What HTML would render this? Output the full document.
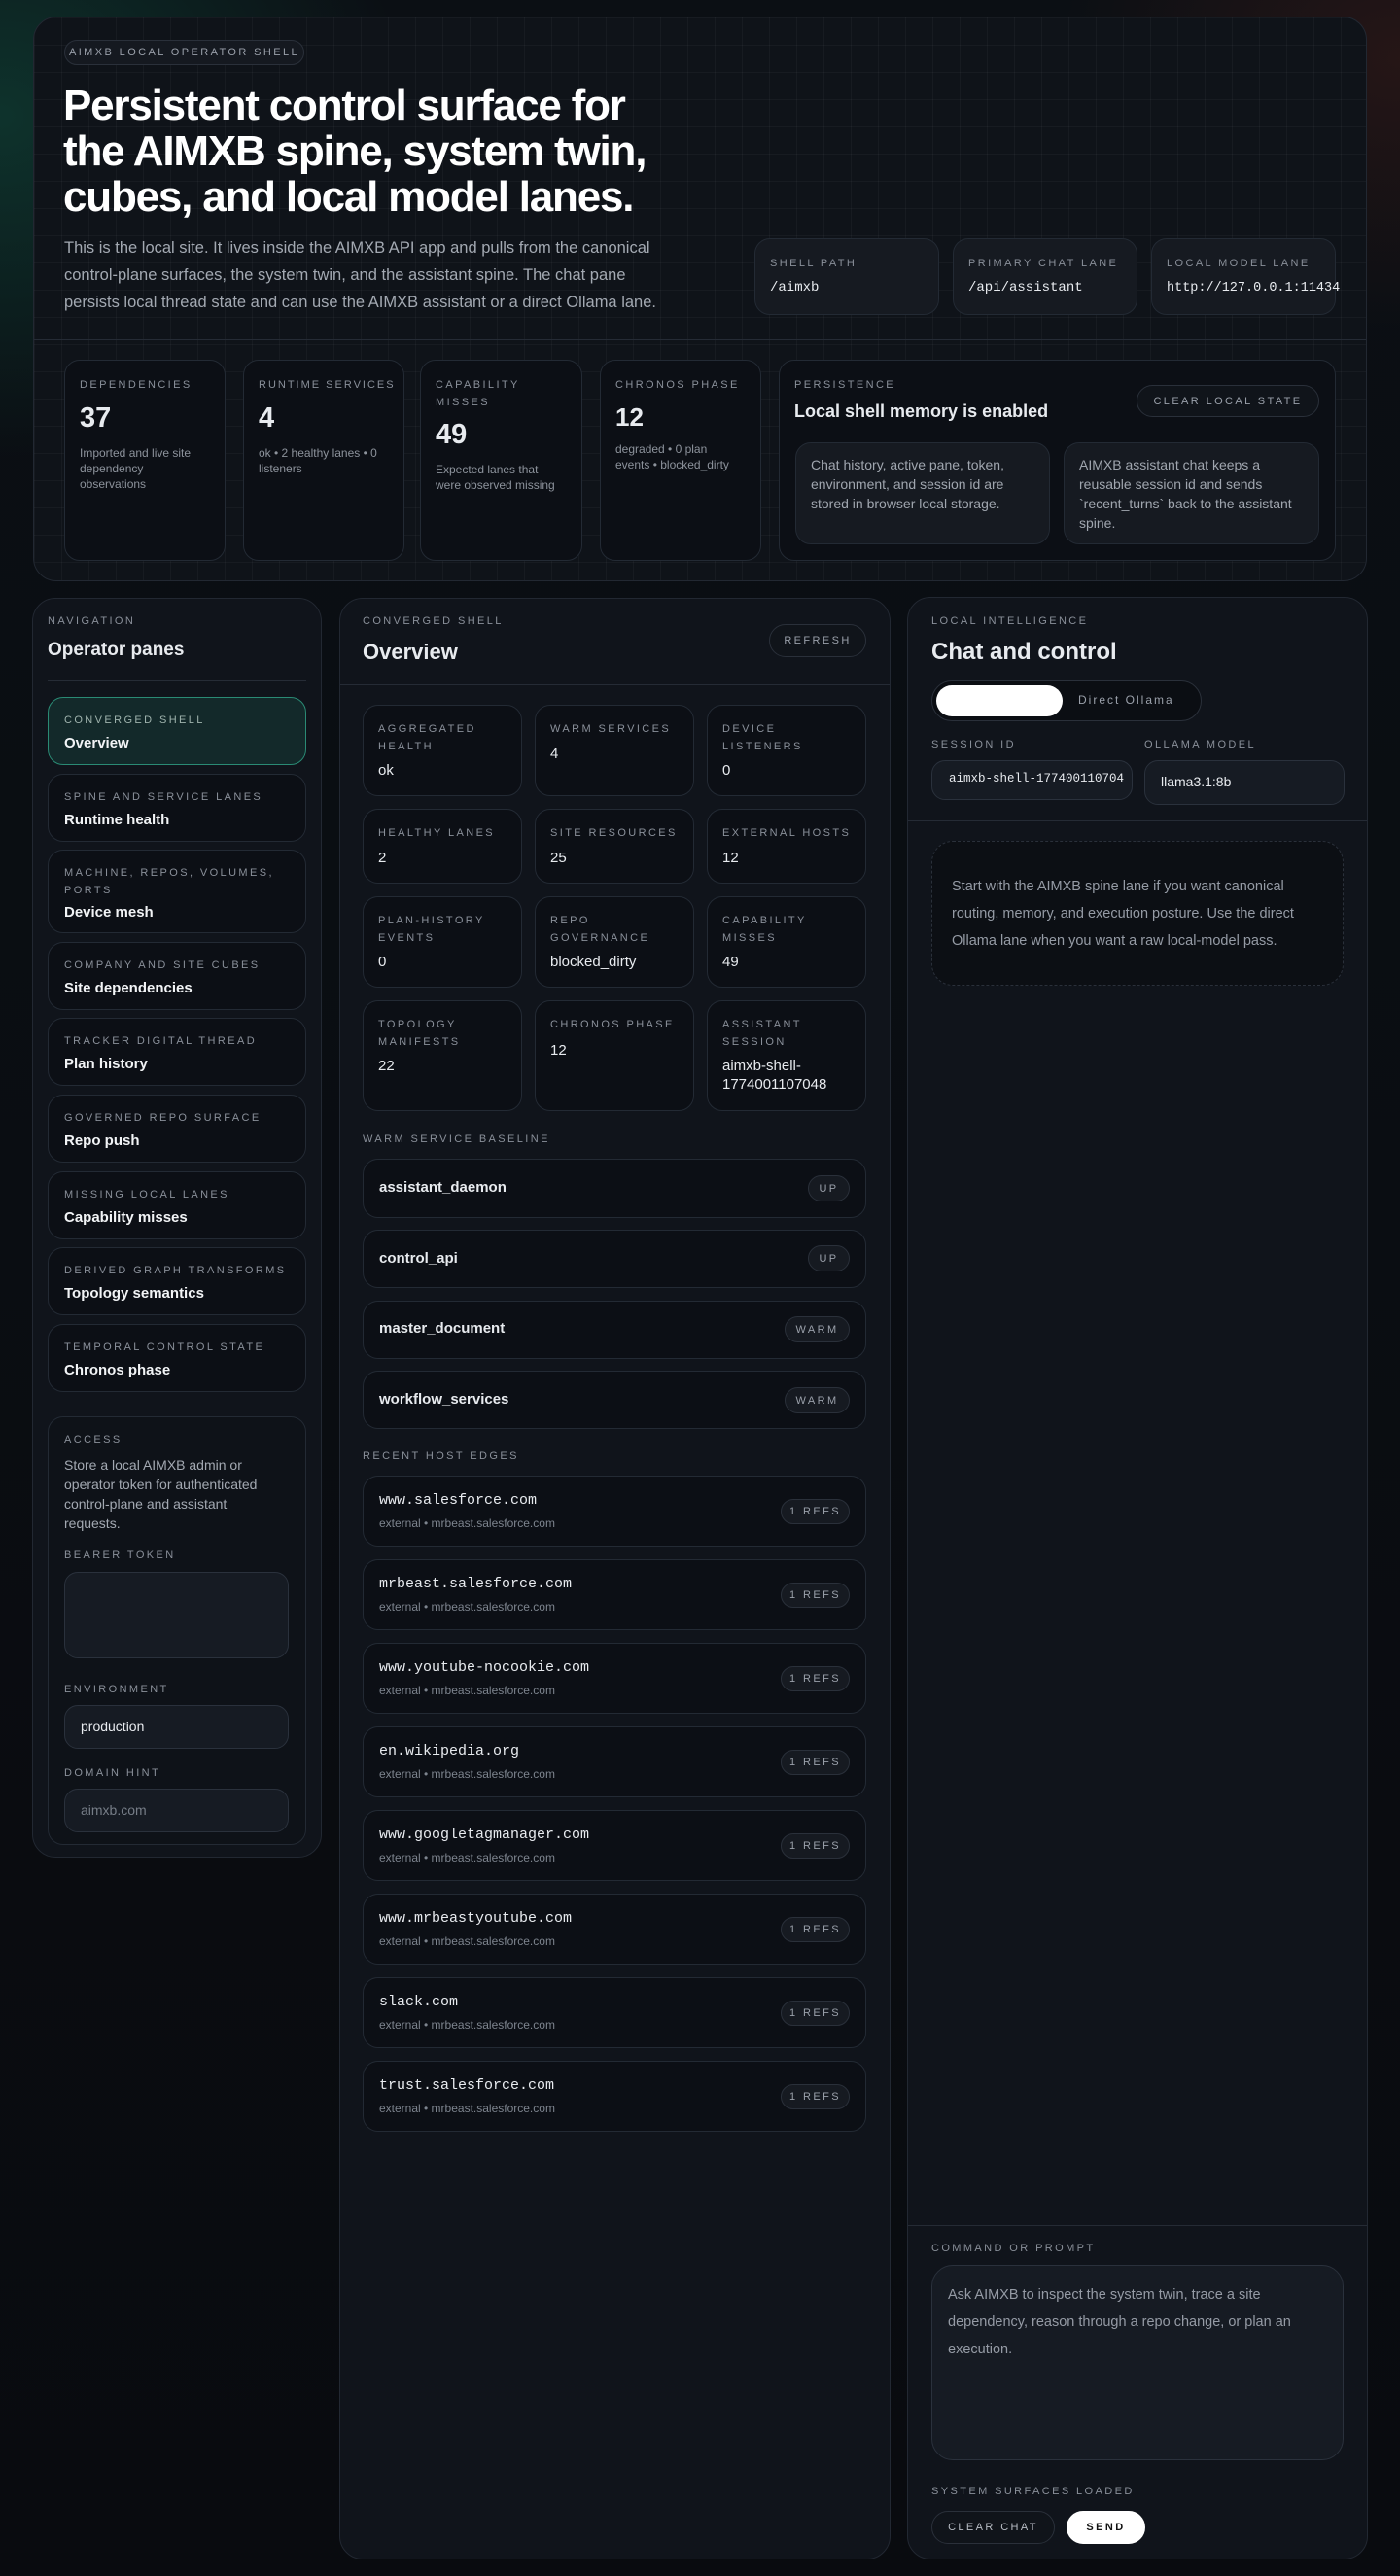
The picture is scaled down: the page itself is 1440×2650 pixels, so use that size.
<!DOCTYPE html>
<html><head><meta charset="utf-8">
<style>
*{box-sizing:border-box;margin:0;padding:0}
html,body{width:1440px;height:2650px;overflow:hidden}
body{position:relative;background:#0a0d12;font-family:"Liberation Sans",sans-serif;color:#e8ebef}
.bg{position:absolute;inset:0;background:
radial-gradient(600px 500px at 0px 120px,rgba(16,80,64,.55),transparent 70%),
radial-gradient(500px 400px at 1440px 60px,rgba(70,30,25,.45),transparent 70%),
linear-gradient(#0b0f14,#090b0f);}
.a{position:absolute}
.card{position:absolute;background:#10141b;border:1px solid #222832;border-radius:24px}
.box{position:absolute;background:#0c0f15;border:1px solid #232a34;border-radius:16px}
.lab{position:absolute;font-size:11px;letter-spacing:2.4px;text-transform:uppercase;color:#8a909a;line-height:18px}
.t{position:absolute;white-space:nowrap}
.mono{font-family:"Liberation Mono",monospace}
.pill{position:absolute;border:1px solid #2a303a;border-radius:999px;font-size:11px;letter-spacing:2.4px;color:#9aa0aa;display:flex;align-items:center;justify-content:center;background:#161a21}
.grid{position:absolute;inset:0;border-radius:24px;background-image:linear-gradient(rgba(255,255,255,.035) 1px,transparent 1px),linear-gradient(90deg,rgba(255,255,255,.035) 1px,transparent 1px);background-size:28px 28px}
.nv .lab{left:16px;top:14px}
.nv .ti{position:absolute;left:16px;font-size:15px;font-weight:bold;color:#f2f4f6}
.inp{position:absolute;background:#161b23;border:1px solid #2a313c;border-radius:14px}
</style></head><body>
<div class="bg"></div>

<!-- HERO -->
<div class="card" style="left:34px;top:17px;width:1372px;height:581px;background:#0f1319">
 <div class="grid"></div>
</div>
<div class="pill" style="left:66px;top:41px;width:247px;height:26px;background:#151920">AIMXB LOCAL OPERATOR SHELL</div>
<div class="a" style="left:65px;top:85px;white-space:nowrap;font-size:44px;font-weight:bold;line-height:47px;letter-spacing:-1.2px;color:#fff">Persistent control surface for<br>the AIMXB spine, system twin,<br>cubes, and local model lanes.</div>
<div class="a" style="left:66px;top:241px;white-space:nowrap;font-size:16.5px;line-height:28px;color:#a3a9b2">This is the local site. It lives inside the AIMXB API app and pulls from the canonical<br>control-plane surfaces, the system twin, and the assistant spine. The chat pane<br>persists local thread state and can use the AIMXB assistant or a direct Ollama lane.</div>

<div class="box" style="left:776px;top:245px;width:190px;height:79px;background:#161a21"></div>
<div class="lab" style="left:792px;top:262px">SHELL PATH</div>
<div class="t mono" style="left:792px;top:288px;font-size:14px">/aimxb</div>
<div class="box" style="left:980px;top:245px;width:190px;height:79px;background:#161a21"></div>
<div class="lab" style="left:996px;top:262px">PRIMARY CHAT LANE</div>
<div class="t mono" style="left:996px;top:288px;font-size:14px">/api/assistant</div>
<div class="box" style="left:1184px;top:245px;width:190px;height:79px;background:#161a21"></div>
<div class="lab" style="left:1200px;top:262px">LOCAL MODEL LANE</div>
<div class="t mono" style="left:1200px;top:289px;font-size:13.5px">http://127.0.0.1:11434</div>

<div class="a" style="left:35px;top:349px;width:1370px;height:1px;background:#252b35"></div>

<div class="box" style="left:66px;top:370px;width:166px;height:207px"></div>
<div class="lab" style="left:82px;top:387px">DEPENDENCIES</div>
<div class="t" style="left:82px;top:414px;font-size:29px;font-weight:bold">37</div>
<div class="a" style="left:82px;top:458px;width:135px;font-size:12px;line-height:16px;color:#8d939c">Imported and live site dependency observations</div>

<div class="box" style="left:250px;top:370px;width:166px;height:207px"></div>
<div class="lab" style="left:266px;top:387px;letter-spacing:2px">RUNTIME SERVICES</div>
<div class="t" style="left:266px;top:414px;font-size:29px;font-weight:bold">4</div>
<div class="a" style="left:266px;top:458px;width:140px;font-size:12px;line-height:16px;color:#8d939c">ok • 2 healthy lanes • 0 listeners</div>

<div class="box" style="left:432px;top:370px;width:167px;height:207px"></div>
<div class="lab" style="left:448px;top:387px;width:120px;white-space:normal">CAPABILITY MISSES</div>
<div class="t" style="left:448px;top:431px;font-size:29px;font-weight:bold">49</div>
<div class="a" style="left:448px;top:475px;width:125px;font-size:12px;line-height:16px;color:#8d939c">Expected lanes that were observed missing</div>

<div class="box" style="left:617px;top:370px;width:166px;height:207px"></div>
<div class="lab" style="left:633px;top:387px">CHRONOS PHASE</div>
<div class="t" style="left:633px;top:414px;font-size:26px;font-weight:bold">12</div>
<div class="a" style="left:633px;top:454px;width:130px;font-size:12px;line-height:16px;color:#8d939c">degraded • 0 plan<br>events • blocked_dirty</div>

<div class="box" style="left:801px;top:370px;width:573px;height:207px"></div>
<div class="lab" style="left:817px;top:387px">PERSISTENCE</div>
<div class="t" style="left:817px;top:413px;font-size:18px;font-weight:bold">Local shell memory is enabled</div>
<div class="pill" style="left:1169px;top:396px;width:188px;height:33px;background:#10141a">CLEAR LOCAL STATE</div>
<div class="box" style="left:818px;top:455px;width:262px;height:105px;background:#161a21"></div>
<div class="a" style="left:834px;top:468px;width:235px;font-size:14px;line-height:20px;color:#a0a6af">Chat history, active pane, token, environment, and session id are stored in browser local storage.</div>
<div class="box" style="left:1094px;top:455px;width:263px;height:105px;background:#161a21"></div>
<div class="a" style="left:1110px;top:468px;width:235px;font-size:14px;line-height:20px;color:#a0a6af">AIMXB assistant chat keeps a reusable session id and sends `recent_turns` back to the assistant spine.</div>

<!-- NAV -->
<div class="card" style="left:33px;top:615px;width:298px;height:1296px"></div>
<div class="lab" style="left:49px;top:630px">NAVIGATION</div>
<div class="t" style="left:49px;top:658px;font-size:19px;font-weight:bold">Operator panes</div>
<div class="a" style="left:49px;top:700px;width:266px;height:1px;background:#262c36"></div>

<div class="box nv" style="left:49px;top:717px;width:266px;height:70px;background:#13292a;border:1.5px solid #2a8a74"><div class="lab" style="color:#9fb3ad">CONVERGED SHELL</div><div class="ti" style="top:38px">Overview</div></div>
<div class="box nv" style="left:49px;top:796px;width:266px;height:70px"><div class="lab">SPINE AND SERVICE LANES</div><div class="ti" style="top:38px">Runtime health</div></div>
<div class="box nv" style="left:49px;top:874px;width:266px;height:86px"><div class="lab" style="width:240px">MACHINE, REPOS, VOLUMES, PORTS</div><div class="ti" style="top:55px">Device mesh</div></div>
<div class="box nv" style="left:49px;top:969px;width:266px;height:70px"><div class="lab">COMPANY AND SITE CUBES</div><div class="ti" style="top:38px">Site dependencies</div></div>
<div class="box nv" style="left:49px;top:1047px;width:266px;height:70px"><div class="lab">TRACKER DIGITAL THREAD</div><div class="ti" style="top:38px">Plan history</div></div>
<div class="box nv" style="left:49px;top:1126px;width:266px;height:70px"><div class="lab">GOVERNED REPO SURFACE</div><div class="ti" style="top:38px">Repo push</div></div>
<div class="box nv" style="left:49px;top:1205px;width:266px;height:70px"><div class="lab">MISSING LOCAL LANES</div><div class="ti" style="top:38px">Capability misses</div></div>
<div class="box nv" style="left:49px;top:1283px;width:266px;height:70px"><div class="lab">DERIVED GRAPH TRANSFORMS</div><div class="ti" style="top:38px">Topology semantics</div></div>
<div class="box nv" style="left:49px;top:1362px;width:266px;height:70px"><div class="lab">TEMPORAL CONTROL STATE</div><div class="ti" style="top:38px">Chronos phase</div></div>

<div class="box" style="left:49px;top:1457px;width:266px;height:441px;background:#0e1218"></div>
<div class="lab" style="left:66px;top:1472px">ACCESS</div>
<div class="a" style="left:66px;top:1497px;white-space:nowrap;font-size:14px;line-height:20px;color:#a3a9b2">Store a local AIMXB admin or<br>operator token for authenticated<br>control-plane and assistant<br>requests.</div>
<div class="lab" style="left:66px;top:1591px">BEARER TOKEN</div>
<div class="inp" style="left:66px;top:1617px;width:231px;height:89px"></div>
<div class="lab" style="left:66px;top:1729px">ENVIRONMENT</div>
<div class="inp" style="left:66px;top:1754px;width:231px;height:45px"></div>
<div class="t" style="left:83px;top:1768px;font-size:14px">production</div>
<div class="lab" style="left:66px;top:1815px">DOMAIN HINT</div>
<div class="inp" style="left:66px;top:1840px;width:231px;height:45px"></div>
<div class="t" style="left:83px;top:1854px;font-size:14px;color:#767d87">aimxb.com</div>

<!-- CENTER -->
<div class="card" style="left:349px;top:615px;width:567px;height:2018px"></div>
<div class="lab" style="left:373px;top:630px">CONVERGED SHELL</div>
<div class="t" style="left:373px;top:658px;font-size:22px;font-weight:bold">Overview</div>
<div class="pill" style="left:791px;top:642px;width:100px;height:34px;background:#10141a">REFRESH</div>
<div class="a" style="left:350px;top:704px;width:565px;height:1px;background:#252b35"></div>

<div class="box" style="left:373px;top:725px;width:164px;height:94px"></div>
<div class="lab" style="left:389px;top:741px;width:120px">AGGREGATED HEALTH</div><div class="t" style="left:389px;top:784px;font-size:15px">ok</div>
<div class="box" style="left:550px;top:725px;width:164px;height:94px"></div>
<div class="lab" style="left:566px;top:741px">WARM SERVICES</div><div class="t" style="left:566px;top:767px;font-size:15px">4</div>
<div class="box" style="left:727px;top:725px;width:164px;height:94px"></div>
<div class="lab" style="left:743px;top:741px;width:120px">DEVICE LISTENERS</div><div class="t" style="left:743px;top:784px;font-size:15px">0</div>

<div class="box" style="left:373px;top:832px;width:164px;height:77px"></div>
<div class="lab" style="left:389px;top:848px">HEALTHY LANES</div><div class="t" style="left:389px;top:874px;font-size:15px">2</div>
<div class="box" style="left:550px;top:832px;width:164px;height:77px"></div>
<div class="lab" style="left:566px;top:848px">SITE RESOURCES</div><div class="t" style="left:566px;top:874px;font-size:15px">25</div>
<div class="box" style="left:727px;top:832px;width:164px;height:77px"></div>
<div class="lab" style="left:743px;top:848px">EXTERNAL HOSTS</div><div class="t" style="left:743px;top:874px;font-size:15px">12</div>

<div class="box" style="left:373px;top:922px;width:164px;height:94px"></div>
<div class="lab" style="left:389px;top:938px;width:120px">PLAN-HISTORY EVENTS</div><div class="t" style="left:389px;top:981px;font-size:15px">0</div>
<div class="box" style="left:550px;top:922px;width:164px;height:94px"></div>
<div class="lab" style="left:566px;top:938px;width:120px">REPO GOVERNANCE</div><div class="t" style="left:566px;top:981px;font-size:15px">blocked_dirty</div>
<div class="box" style="left:727px;top:922px;width:164px;height:94px"></div>
<div class="lab" style="left:743px;top:938px;width:120px">CAPABILITY MISSES</div><div class="t" style="left:743px;top:981px;font-size:15px">49</div>

<div class="box" style="left:373px;top:1029px;width:164px;height:114px"></div>
<div class="lab" style="left:389px;top:1045px;width:120px">TOPOLOGY MANIFESTS</div><div class="t" style="left:389px;top:1088px;font-size:15px">22</div>
<div class="box" style="left:550px;top:1029px;width:164px;height:114px"></div>
<div class="lab" style="left:566px;top:1045px">CHRONOS PHASE</div><div class="t" style="left:566px;top:1072px;font-size:15px">12</div>
<div class="box" style="left:727px;top:1029px;width:164px;height:114px"></div>
<div class="lab" style="left:743px;top:1045px;width:120px">ASSISTANT SESSION</div><div class="a" style="left:743px;top:1087px;font-size:15px;line-height:19px">aimxb-shell-<br>1774001107048</div>

<div class="lab" style="left:373px;top:1163px">WARM SERVICE BASELINE</div>

<div class="box" style="left:373px;top:1192px;width:518px;height:61px"></div><div class="t" style="left:390px;top:1213px;font-size:15px;font-weight:bold">assistant_daemon</div><div class="pill" style="left:831px;top:1209px;width:43px;height:27px">UP</div>
<div class="box" style="left:373px;top:1265px;width:518px;height:60px"></div><div class="t" style="left:390px;top:1286px;font-size:15px;font-weight:bold">control_api</div><div class="pill" style="left:831px;top:1281px;width:43px;height:27px">UP</div>
<div class="box" style="left:373px;top:1338px;width:518px;height:60px"></div><div class="t" style="left:390px;top:1358px;font-size:15px;font-weight:bold">master_document</div><div class="pill" style="left:807px;top:1354px;width:67px;height:27px">WARM</div>
<div class="box" style="left:373px;top:1410px;width:518px;height:60px"></div><div class="t" style="left:390px;top:1431px;font-size:15px;font-weight:bold">workflow_services</div><div class="pill" style="left:807px;top:1427px;width:67px;height:27px">WARM</div>

<div class="lab" style="left:373px;top:1489px">RECENT HOST EDGES</div>

<div class="box" style="left:373px;top:1518px;width:518px;height:73px"></div><div class="t mono" style="left:390px;top:1535px;font-size:15px">www.salesforce.com</div><div class="t" style="left:390px;top:1560px;font-size:12px;color:#7d848e">external • mrbeast.salesforce.com</div><div class="pill" style="left:803px;top:1542px;width:71px;height:26px">1 REFS</div>
<div class="box" style="left:373px;top:1604px;width:518px;height:73px"></div><div class="t mono" style="left:390px;top:1621px;font-size:15px">mrbeast.salesforce.com</div><div class="t" style="left:390px;top:1646px;font-size:12px;color:#7d848e">external • mrbeast.salesforce.com</div><div class="pill" style="left:803px;top:1628px;width:71px;height:26px">1 REFS</div>
<div class="box" style="left:373px;top:1690px;width:518px;height:73px"></div><div class="t mono" style="left:390px;top:1707px;font-size:15px">www.youtube-nocookie.com</div><div class="t" style="left:390px;top:1732px;font-size:12px;color:#7d848e">external • mrbeast.salesforce.com</div><div class="pill" style="left:803px;top:1714px;width:71px;height:26px">1 REFS</div>
<div class="box" style="left:373px;top:1776px;width:518px;height:73px"></div><div class="t mono" style="left:390px;top:1793px;font-size:15px">en.wikipedia.org</div><div class="t" style="left:390px;top:1818px;font-size:12px;color:#7d848e">external • mrbeast.salesforce.com</div><div class="pill" style="left:803px;top:1800px;width:71px;height:26px">1 REFS</div>
<div class="box" style="left:373px;top:1862px;width:518px;height:73px"></div><div class="t mono" style="left:390px;top:1879px;font-size:15px">www.googletagmanager.com</div><div class="t" style="left:390px;top:1904px;font-size:12px;color:#7d848e">external • mrbeast.salesforce.com</div><div class="pill" style="left:803px;top:1886px;width:71px;height:26px">1 REFS</div>
<div class="box" style="left:373px;top:1948px;width:518px;height:73px"></div><div class="t mono" style="left:390px;top:1965px;font-size:15px">www.mrbeastyoutube.com</div><div class="t" style="left:390px;top:1990px;font-size:12px;color:#7d848e">external • mrbeast.salesforce.com</div><div class="pill" style="left:803px;top:1972px;width:71px;height:26px">1 REFS</div>
<div class="box" style="left:373px;top:2034px;width:518px;height:73px"></div><div class="t mono" style="left:390px;top:2051px;font-size:15px">slack.com</div><div class="t" style="left:390px;top:2076px;font-size:12px;color:#7d848e">external • mrbeast.salesforce.com</div><div class="pill" style="left:803px;top:2058px;width:71px;height:26px">1 REFS</div>
<div class="box" style="left:373px;top:2120px;width:518px;height:73px"></div><div class="t mono" style="left:390px;top:2137px;font-size:15px">trust.salesforce.com</div><div class="t" style="left:390px;top:2162px;font-size:12px;color:#7d848e">external • mrbeast.salesforce.com</div><div class="pill" style="left:803px;top:2144px;width:71px;height:26px">1 REFS</div>

<!-- CHAT -->
<div class="card" style="left:933px;top:614px;width:474px;height:2019px"></div>
<div class="lab" style="left:958px;top:630px">LOCAL INTELLIGENCE</div>
<div class="t" style="left:958px;top:657px;font-size:24px;font-weight:bold">Chat and control</div>
<div class="a" style="left:958px;top:700px;width:278px;height:42px;border:1px solid #2a303a;border-radius:999px;background:#0b0e13"></div>
<div class="a" style="left:963px;top:705px;width:130px;height:32px;border-radius:999px;background:#fff"></div>
<div class="t" style="left:1109px;top:713px;font-size:12px;letter-spacing:2px;color:#9aa0aa">Direct Ollama</div>
<div class="lab" style="left:958px;top:757px">SESSION ID</div>
<div class="lab" style="left:1177px;top:757px">OLLAMA MODEL</div>
<div class="inp" style="left:958px;top:782px;width:207px;height:41px;overflow:hidden"><div class="t mono" style="left:17px;top:11px;font-size:12.5px">aimxb-shell-177400110704</div></div>
<div class="inp" style="left:1177px;top:782px;width:206px;height:46px"></div>
<div class="t" style="left:1194px;top:796px;font-size:14px">llama3.1:8b</div>
<div class="a" style="left:934px;top:844px;width:472px;height:1px;background:#252b35"></div>
<div class="a" style="left:958px;top:865px;width:424px;height:149px;border:1px dashed #2a303a;border-radius:22px;background:#0c0f14"></div>
<div class="a" style="left:979px;top:898px;white-space:nowrap;font-size:14.5px;line-height:28px;color:#959ba5">Start with the AIMXB spine lane if you want canonical<br>routing, memory, and execution posture. Use the direct<br>Ollama lane when you want a raw local-model pass.</div>

<div class="a" style="left:934px;top:2289px;width:472px;height:1px;background:#252b35"></div>
<div class="lab" style="left:958px;top:2304px">COMMAND OR PROMPT</div>
<div class="inp" style="left:958px;top:2330px;width:424px;height:201px;border-radius:22px"></div>
<div class="a" style="left:975px;top:2347px;white-space:nowrap;font-size:14.5px;line-height:28px;color:#959ba5">Ask AIMXB to inspect the system twin, trace a site<br>dependency, reason through a repo change, or plan an<br>execution.</div>
<div class="lab" style="left:958px;top:2554px">SYSTEM SURFACES LOADED</div>
<div class="pill" style="left:958px;top:2583px;width:127px;height:34px;background:#10141a;color:#b8bdc5">CLEAR CHAT</div>
<div class="pill" style="left:1097px;top:2583px;width:81px;height:34px;background:#fff;color:#111;font-weight:bold;border-color:#fff">SEND</div>
</body></html>
